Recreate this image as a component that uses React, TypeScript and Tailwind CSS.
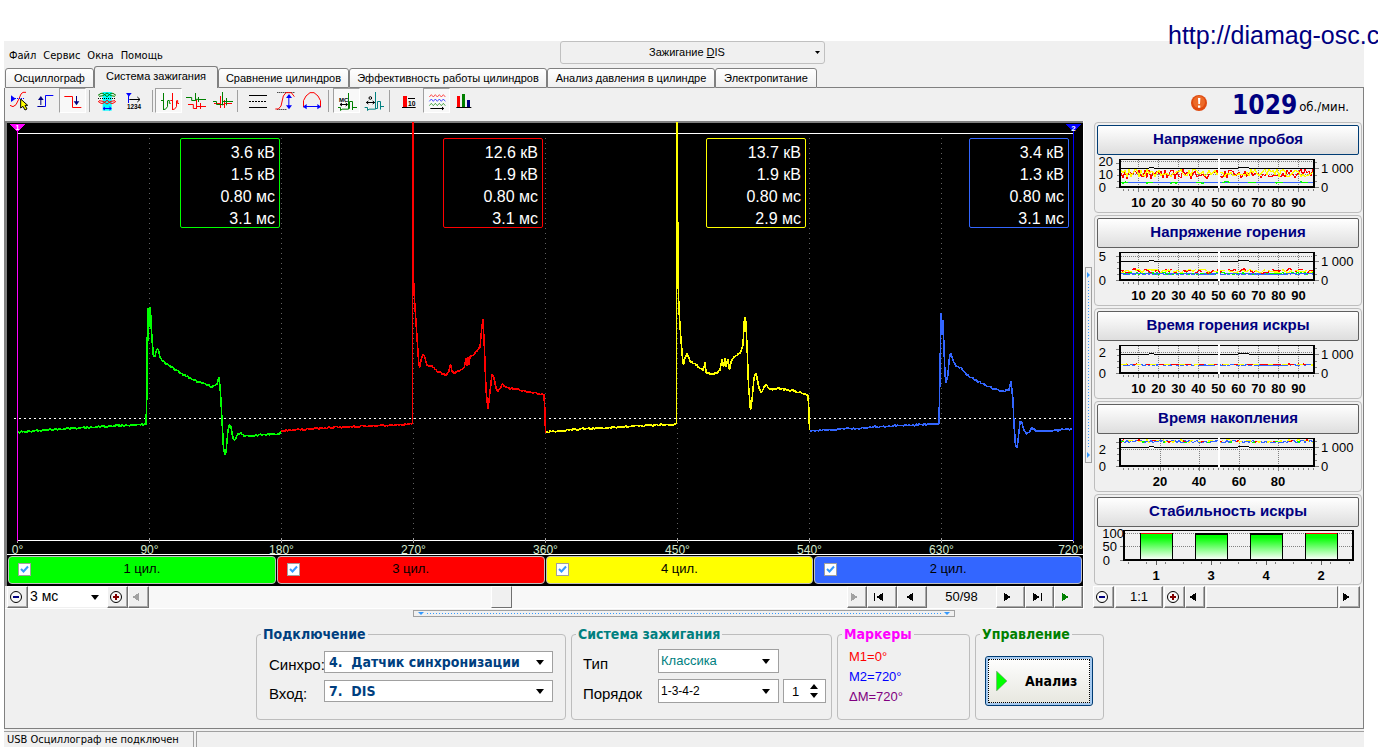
import React from "react";

type Pt = [number, number];

const sans = "font-['Liberation_Sans',Arial,sans-serif]";
const tahoma = "font-['DejaVu_Sans_Condensed','DejaVu_Sans',sans-serif]";

/* ---------- wave data ---------- */

const green: Pt[] = [[18, 432], [40, 430.5], [60, 429], [80, 428], [110, 426], [146, 424.5], [147, 390], [147.5, 308], [148.5, 341], [149, 308], [150.5, 308], [151, 325], [152.5, 345], [153.5, 357], [155, 356], [157, 349], [158.5, 350], [160, 357], [163, 361], [170, 366], [180, 373], [190, 378], [198, 382], [206, 384.5], [212, 387], [217, 384], [219, 377], [220, 387], [221, 401], [222, 420], [223.5, 448], [225, 455], [226, 452], [228, 430], [229.5, 424.5], [231, 427], [233, 438], [235, 440], [238, 434], [241, 432.5], [244, 436], [250, 436], [262, 435], [279, 434.5], [281, 431]];
const red: Pt[] = [[281, 431], [300, 429.5], [340, 427], [380, 425.5], [401, 424.5], [412.3, 423.5], [412.3, 123], [413.2, 123], [413.6, 280], [414.5, 300], [416, 322], [417.5, 345], [418.5, 360], [419.5, 368], [421, 360], [423, 354], [425, 358], [427, 365], [432, 366], [438, 372], [446, 375], [449, 371], [450.5, 364], [452, 372], [455, 373], [464, 368], [466, 358], [467, 366], [468, 357], [469, 365], [470, 357], [475, 353], [480, 347], [482, 326], [483, 319], [484.5, 350], [486, 390], [488, 409], [490, 392], [492, 374], [494, 378], [496, 388], [498, 392], [502, 384], [506, 387], [513, 389], [525, 391], [544, 395], [545, 412], [545.5, 433]];
const yellow: Pt[] = [[546, 432], [580, 429], [620, 427], [660, 425], [676.3, 424], [676.3, 123], [677.2, 123], [678, 280], [679, 310], [681, 340], [682.5, 358], [683.5, 365], [685, 358], [687, 353], [690, 361], [696, 365], [702, 369], [703, 371], [705, 362], [706, 372], [710, 374], [717, 373], [720, 370], [722, 359], [723.5, 367], [725, 358], [726, 367], [728, 359], [729.5, 370], [731, 362], [734, 357], [740, 353], [743, 345], [744.5, 318], [745.5, 317], [747, 345], [748.5, 385], [750.5, 410], [752, 400], [754, 378], [756, 373], [759, 388], [761, 393], [764, 387], [766, 384.5], [770, 389], [780, 389], [795, 391], [808, 395], [809, 412], [809.5, 430]];
const blue: Pt[] = [[810, 431], [850, 428.5], [900, 425.5], [939, 424], [940, 372], [941, 313], [942, 335], [943, 320], [944, 349], [945, 374], [946, 383], [948, 374], [949, 361], [950, 355], [951, 353], [953, 360], [956, 366], [962, 369], [966, 374], [975, 380], [985, 385], [995, 389], [1003, 391], [1009, 390], [1011, 381], [1013, 400], [1014, 425], [1015.5, 445], [1017, 448], [1018, 441], [1020, 422], [1021.5, 421], [1024, 430], [1027, 434], [1032, 428], [1036, 431], [1050, 431], [1072, 429]];

function noise(i: number) {
  const s = Math.sin(i * 127.1 + 3.7) * 43758.5453;
  return s - Math.floor(s) - 0.5;
}

function trace(points: Pt[], amount: number) {
  let d = `M${points[0][0]} ${points[0][1]}`;
  for (let i = 1; i < points.length; i++) {
    const [x0, y0] = points[i - 1];
    const [x1, y1] = points[i];
    const steps = Math.abs(y1 - y0) < 12 ? Math.floor(x1 - x0) : 0;
    for (let k = 1; k < steps; k++) {
      const t = k / steps;
      d += `L${(x0 + (x1 - x0) * t).toFixed(1)} ${(y0 + (y1 - y0) * t + noise(x0 + k) * amount).toFixed(1)}`;
    }
    d += `L${x1} ${y1}`;
  }
  return d;
}

const cylinders = [
  { name: "1 цил.", color: "#00ff00", bg: "bg-[#00ff00]", x: 180, wave: green, values: ["3.6 кВ", "1.5 кВ", "0.80 мс", "3.1 мс"] },
  { name: "3 цил.", color: "#ff0000", bg: "bg-[#ff0000]", x: 443, wave: red, values: ["12.6 кВ", "1.9 кВ", "0.80 мс", "3.1 мс"] },
  { name: "4 цил.", color: "#ffff00", bg: "bg-[#ffff00]", x: 706, wave: yellow, values: ["13.7 кВ", "1.9 кВ", "0.80 мс", "2.9 мс"] },
  { name: "2 цил.", color: "#3366ff", bg: "bg-[#3366ff]", x: 969, wave: blue, values: ["3.4 кВ", "1.3 кВ", "0.80 мс", "3.1 мс"] },
];

function Scope() {
  return (
    <svg viewBox="7 123 1076 432" className={`block w-full overflow-visible ${sans}`}>
      <rect x="7" y="123" width="1076" height="432" fill="#000" />
      <g shapeRendering="crispEdges">
        {[149, 281, 413, 545, 677, 809, 941].map((x) => (
          <path key={x} d={`M${x}.5 138V539`} stroke="#606060" strokeDasharray="1 4" />
        ))}
        <path d="M17 133.5H1073M17 540.5H1073M7 554.5H1083" stroke="#fff" />
        <path d="M14 418.5H1074" stroke="#fff" strokeDasharray="2 3" />
        {Array.from({ length: 9 }, (_, i) => (
          <path key={i} d={`M${17.5 + i * 132} 538V543`} stroke="#a0a0a0" />
        ))}
        <path d="M17.5 126V541" stroke="#ff00ff" />
        <path d="M1073.5 126V541" stroke="#0000ff" />
        <path d="M10 124H25L17.5 132Z" fill="#ff00ff" />
        <path d="M1066 124H1081L1073.5 132Z" fill="#0000ff" />
      </g>
      <text x="17.5" y="130" fontSize="7" fontWeight="700" fill="#fff" textAnchor="middle">1</text>
      <text x="1073.5" y="131" fontSize="8" fontWeight="700" fill="#fff" textAnchor="middle">2</text>
      {cylinders.map((c) => (
        <g key={c.name}>
          <path d={trace(c.wave, 1.8)} fill="none" stroke={c.color} strokeWidth="1.6" strokeLinejoin="bevel" shapeRendering="crispEdges" />
          <rect x={c.x + 0.5} y="138.5" width="99" height="89" rx="1.5" fill="none" stroke={c.color} />
          {c.values.map((v, i) => (
            <text key={i} x={c.x + 95} y={158 + i * 22} fontSize="16" fill="#fff" textAnchor="end">{v}</text>
          ))}
        </g>
      ))}
      {Array.from({ length: 9 }, (_, i) => (
        <text key={i} x={i === 8 ? 1083 : 17.5 + i * 132} y="554" fontSize="12" fill="#d4e8cc" textAnchor={i === 8 ? "end" : "middle"}>{i * 90}°</text>
      ))}
    </svg>
  );
}

/* ---------- side charts ---------- */

function series(base: number, amp: number, seed: number, step = 2) {
  let d = "";
  for (let x = 1121; x <= 1313; x += step) {
    d += `${d ? "L" : "M"}${x} ${(base + noise(x + seed) * amp).toFixed(1)}`;
  }
  return d;
}

type Trend = {
  title: string;
  focus?: boolean;
  left: [string, number][];
  ticks: [string, number][];
  lines: { d: string; color: string; dash?: string }[];
  rpmY: number;
  gridY: number[];
};

const tens: [string, number][] = [10, 20, 30, 40, 50, 60, 70, 80, 90].map((v, i) => [String(v), 1138.5 + i * 20]);

const trends: Trend[] = [
  {
    title: "Напряжение пробоя", focus: true, left: [["20", 161], ["10", 174], ["0", 187]], ticks: tens, rpmY: 168.5, gridY: [161.5, 174.5],
    lines: [
      { d: series(174, 9, 5), color: "#ff0000" },
      { d: series(173, 8, 41), color: "#ffff00" },
      { d: series(182.5, 0.5, 3), color: "#3366ff" },
      { d: series(182.5, 1.5, 9), color: "#00ff00", dash: "8 19" },
    ],
  },
  {
    title: "Напряжение горения", left: [["5", 163], ["0", 187]], ticks: tens, rpmY: 168.5, gridY: [163.5],
    lines: [
      { d: series(180.5, 2, 13), color: "#00ff00" },
      { d: series(178, 5, 21, 3), color: "#ff0000", dash: "9 4" },
      { d: series(178, 4, 31, 3), color: "#ffff00", dash: "12 3" },
      { d: series(181, 1, 3), color: "#3366ff" },
    ],
  },
  {
    title: "Время горения искры", left: [["2", 166], ["0", 187]], ticks: tens, rpmY: 168.5, gridY: [166.5],
    lines: [
      { d: series(179, 1, 3), color: "#3366ff" },
      { d: series(178.5, 1, 7), color: "#ff0000", dash: "8 5" },
      { d: series(178.5, 1, 17), color: "#ffff00", dash: "6 9" },
    ],
  },
  {
    title: "Время накопления", left: [["2", 170], ["0", 187]],
    ticks: [["20", 1160], ["40", 1199], ["60", 1239], ["80", 1278]], rpmY: 168.5, gridY: [170.5],
    lines: [
      { d: series(162.5, 3, 3), color: "#3366ff" },
      { d: series(162, 3, 7), color: "#ffff00", dash: "5 6" },
      { d: series(162, 3, 11), color: "#ff0000", dash: "4 16" },
      { d: series(163, 2, 17), color: "#00ff00", dash: "3 21" },
    ],
  },
];

function GroupTitle({ children, focus }: { children: React.ReactNode; focus?: boolean }) {
  return (
    <button
      className={`mx-[2px] mt-[2px] h-[30px] rounded-[2px] border bg-linear-to-b from-white to-[#dedede] pb-[2px] text-center text-[15px] font-bold text-[#000080] ${focus ? "border-[#003c74]" : "border-[#606060]"}`}
    >
      {children}
    </button>
  );
}

function TrendPanel({ t }: { t: Trend }) {
  return (
    <section className="flex h-[91px] flex-col rounded-[4px] border border-[#bdbdbd]">
      <GroupTitle focus={t.focus}>{t.title}</GroupTitle>
      <svg viewBox="1095 155 266 56" className="block w-full overflow-visible">
        <g shapeRendering="crispEdges" fill="none">
          {t.gridY.map((y) => <path key={y} d={`M1121 ${y}H1313`} stroke="#808080" strokeDasharray="1 1" />)}
          {t.ticks.map(([n, x]) => <path key={n} d={`M${x} 160V187`} stroke="#808080" strokeDasharray="1 1" />)}
          {t.ticks.map(([n, x]) => <path key={n} d={`M${x} 188V192`} stroke="#808080" />)}
          <path d="M1123 189.5H1314" stroke="#808080" strokeWidth="2" strokeDasharray="1 4" />
          <path d="M1116 187.5H1119M1117 181.5H1119M1117 175.5H1119M1117 169.5H1119M1116 163.5H1119M1315 187.5H1319M1315 181.5H1317M1315 175.5H1317M1315 168.5H1319M1315 162.5H1317" stroke="#808080" />
          <path d={`M1121 ${t.rpmY}H1148L1150 ${t.rpmY - 1}H1153L1155 ${t.rpmY}H1237L1239 ${t.rpmY - 1}H1248L1250 ${t.rpmY}H1313`} stroke="#000" />
          {t.lines.map((l, i) => <path key={i} d={l.d} stroke={l.color} strokeDasharray={l.dash} strokeWidth="1.2" />)}
          <path d="M1119 159.5H1315" stroke="#000" />
          <path d="M1120 159V188M1314 159V188M1119 187H1315" stroke="#000" strokeWidth="2" />
          <path d="M1218.5 158V188" stroke="#fff" strokeWidth="2" />
        </g>
        <g fontSize="13" fill="#000">
          {t.left.map(([n, y]) => <text key={n} x={n.length > 1 ? 1113 : 1106} y={y + 5} textAnchor="end">{n}</text>)}
          <text x="1321" y="173">1 000</text>
          <text x="1321" y="192">0</text>
          {t.ticks.map(([n, x]) => <text key={n} x={x} y="207" textAnchor="middle" fontWeight="700">{n}</text>)}
        </g>
      </svg>
    </section>
  );
}

function StabilityPanel() {
  const bars: [string, number, boolean][] = [["1", 1140, true], ["3", 1195, false], ["4", 1250, false], ["2", 1305, true]];
  return (
    <section className="flex h-[91px] flex-col rounded-[4px] border border-[#bdbdbd]">
      <GroupTitle>Стабильность искры</GroupTitle>
      <svg viewBox="1095 527 266 56" className="block w-full overflow-visible">
        <defs>
          <linearGradient id="bar" x1="0" y1="0" x2="0" y2="1">
            <stop offset="0" stopColor="#00ff00" />
            <stop offset="0.15" stopColor="#00ff00" />
            <stop offset="1" stopColor="#ffffff" />
          </linearGradient>
        </defs>
        <g shapeRendering="crispEdges" fill="none">
          <path d="M1125 533.5H1352M1125 546.5H1352" stroke="#808080" strokeDasharray="1 1" />
          <path d="M1120 546.5H1124M1120 560.5H1124M1128 562V564M1146 562V564M1165 562V564M1183 562V564M1201 562V564M1220 562V564M1238 562V564M1256 562V564M1275 562V564M1293 562V564M1311 562V564M1330 562V564M1349 562V564" stroke="#808080" />
          {bars.map(([n, x, hot]) => (
            <g key={n}>
              <rect x={x + 0.5} y="533.5" width="32" height="26" fill="url(#bar)" stroke="#000" />
              <path d={`M${x + 1} ${hot ? 533.5 : 534}H${x + 32}`} stroke={hot ? "#ff0000" : "#000"} strokeWidth={hot ? 1 : 2} />
              <path d={`M${x + 16.5} 561V565`} stroke="#606060" />
            </g>
          ))}
          <path d="M1123 530.5H1354" stroke="#000" />
          <path d="M1124 530V561M1353 530V561M1123 560H1354" stroke="#000" strokeWidth="2" />
        </g>
        <g fontSize="13" fill="#000">
          <text x="1124" y="538" textAnchor="end">100</text>
          <text x="1117" y="551" textAnchor="end">50</text>
          <text x="1110" y="565" textAnchor="end">0</text>
          {bars.map(([n, x]) => <text key={n} x={x + 16} y="580" textAnchor="middle" fontWeight="700">{n}</text>)}
        </g>
      </svg>
    </section>
  );
}

/* ---------- toolbar ---------- */

function Tool({ label, pressed, ml, box, children }: { label: string; pressed?: boolean; ml?: string; box: string; children: React.ReactNode }) {
  return (
    <button
      aria-label={label}
      aria-pressed={pressed}
      className={`flex h-[25px] w-[27px] shrink-0 items-center justify-center border ${ml ?? ""} ${pressed ? "border-t-[#a0a0a0] border-r-white border-b-white border-l-[#a0a0a0] bg-[#f8f8f8]" : "border-transparent"}`}
    >
      <svg viewBox={box} width="20" height="22" fill="none" strokeWidth="3" className="shrink-0">{children}</svg>
    </button>
  );
}

const Sep = ({ ml }: { ml: string }) => <span className={`h-[22px] w-px shrink-0 bg-[#a0a0a0] ${ml}`} />;

function Toolbar() {
  return (
    <div className="flex h-[33px] items-start">
      <div className="flex items-center">
        <Tool label="Синхронизация" box="24 150 60 66">
          <path d="M27 196L36 200L45 194L54 176L60 162L66 157H75" stroke="#ff0000" />
          <path d="M42 175.5H72" stroke="#0000ff" strokeDasharray="3 3" />
          <path d="M30 166V186L44 176Z" fill="#0000ff" />
          <path d="M59 177V204L66 199L72 210L78 207L72 196H80Z" fill="#ffff00" stroke="#000" />
        </Tool>
        <Tool label="Фронт" box="106 150 60 66">
          <path d="M110 199.5H134.5V166.5H158" stroke="#0000ff" />
          <path d="M120.5 195V176M112 199.5H128" stroke="#000080" />
          <path d="M112 180H129L120.5 168Z" fill="#000080" />
        </Tool>
        <Tool label="Спад" pressed box="188 150 60 66">
          <path d="M192 169.5H216.5V202.5H243" stroke="#ff0000" />
          <path d="M228.5 168V188" stroke="#000080" />
          <path d="M220 184H237L228.5 196Z" fill="#000080" />
        </Tool>
        <Sep ml="ml-[3px]" />
        <Tool label="Диапазон" ml="ml-[3px]" box="291 150 60 66">
          <path d="M308 156H335V212H308Z" fill="#00ffff" />
          <path d="M294 166L303 160H309L321 170L333 160H339L348 166" stroke="#008000" />
          <path d="M297 169L309 167L321 159L333 167L345 169" stroke="#008000" />
          <path d="M294 175.5H348" stroke="#000" strokeDasharray="3 3" />
          <path d="M294 184L303 190H309L321 181L333 190H339L348 184" stroke="#ff0000" />
          <path d="M297 182L309 184L321 192L333 184L345 182" stroke="#ff0000" />
          <path d="M310 205.5H333M315 201L309 205.5L315 210M328 201L334 205.5L328 210" stroke="#0000ff" />
        </Tool>
        <Tool label="Отсчёт" box="373 150 60 66">
          <path d="M379 159H396L387.5 170Z" fill="#0000ff" />
          <path d="M386.5 168V189" stroke="#0000ff" />
          <path d="M389 178.5H420M413 171L421 178.5L413 186" stroke="#000" />
          <text x="382" y="208" fontSize="19" fontWeight="700" fill="#000" className={sans}>1234</text>
        </Tool>
        <Sep ml="ml-[5px]" />
        <Tool label="Наложение" pressed ml="ml-[2px]" box="477 150 60 66">
          <path d="M483 181.5H490.5V159V210M490.5 208H496L502.5 200V183M502.5 181.5H508V190H512" stroke="#008000" />
          <path d="M511 181.5H517.5V159V210M517.5 208H523L529.5 200V183M529.5 181.5H533V190.5H538" stroke="#ff0000" />
        </Tool>
        <Tool label="Каскад" box="558 150 60 66">
          <path d="M558 172.5H575V181.5H586.5V159V181.5M586.5 178H595.5V171V186M595.5 178.5H618" stroke="#008000" />
          <path d="M564 193.5H580V205.5H589.5V180V207M589.5 199.5H601.5V189V207M601.5 199.5H618" stroke="#ff0000" />
        </Tool>
        <Tool label="Совмещение" box="639 150 60 66">
          <path d="M642 190.5H661.5V168V204M661.5 193.5H673.5V180V204M673.5 190.5H696" stroke="#ff0000" />
          <path d="M639 184.5H649.5V193.5H667.5V156V196M667.5 184.5H679.5V174V196M679.5 184.5H699" stroke="#008000" />
        </Tool>
        <Sep ml="ml-[1px]" />
        <Tool label="Линии" ml="ml-[6px]" box="744 150 60 66">
          <path d="M747 166.5H801M747 202.5H801" stroke="#000" />
          <path d="M747 184.5H801" stroke="#000" strokeDasharray="6 3" />
        </Tool>
        <Tool label="Амплитуда" box="827 150 60 66">
          <path d="M834 157.5H885M834 208.5H864" stroke="#000" strokeDasharray="3 3" />
          <path d="M828 207H837L845 198L852 168L860 158H876L885 170" stroke="#ff0000" />
          <path d="M868.5 166V202" stroke="#0000ff" />
          <path d="M860 174H878L869 162ZM860 196H878L869 208Z" fill="#0000ff" />
        </Tool>
        <Tool label="Длительность" box="906 150 60 66">
          <path d="M910.5 202V182L918 168L930 158H942L954 168L961.5 182V202" stroke="#ff0000" />
          <path d="M918 199.5H954" stroke="#0000ff" />
          <path d="M920 192V208L909 200ZM952 192V208L963 200Z" fill="#0000ff" />
        </Tool>
        <Sep ml="ml-[3px]" />
        <Tool label="Миллисекунды" pressed ml="ml-[4px]" box="24 150 60 66">
          <text x="30" y="186" fontSize="18" fontWeight="700" fill="#000" className={sans}>МС</text>
          <path d="M33 193.5H54M39 189L33 193.5L39 198M50 189L56 193.5L50 198" stroke="#000" />
          <path d="M27 202.5H34.5V211.5L39 207.5H58.5V159V205.5H61.5V184.5H70.5V210V202.5H84" stroke="#008000" />
        </Tool>
        <Tool label="Градусы" box="102 150 60 66">
          <circle cx="121" cy="174" r="4" stroke="#000" />
          <path d="M109 187.5H134M115 183L109 187.5L115 192M128 183L134 187.5L128 192" stroke="#000" />
          <path d="M104 202.5H112.5V211.5L117 207.5H136.5V156V205.5H142.5V184.5H151.5V208V199.5H162" stroke="#008080" />
        </Tool>
        <Sep ml="ml-[2px]" />
        <Tool label="Значения" ml="ml-[5px]" box="204 150 60 66">
          <path d="M216 168H228V204H216Z" fill="#ff0000" />
          <path d="M231 175.5H252M213 202.5H254" stroke="#000" />
          <text x="231" y="198" fontSize="20" fontWeight="700" fill="#000" className={sans}>10</text>
        </Tool>
        <Tool label="Тренды" pressed ml="ml-px" box="290 150 60 66">
          <path d="M297 171L303 164L309 171L315 164L321 171L327 164L333 171L339 164L345 171" stroke="#ff0000" strokeWidth="2" />
          <path d="M297 184L303 177L309 184L315 177L321 184L327 177L333 184L339 177L345 184" stroke="#0000ff" strokeWidth="2" />
          <path d="M297 197L303 190L309 197L315 190L321 197L327 190L333 197L339 190L345 197" stroke="#008000" strokeWidth="2" />
          <path d="M300 205.5H340M335 201L340 205.5L335 210" stroke="#000" />
        </Tool>
        <Tool label="Диаграмма" box="371 150 60 66">
          <path d="M380 168H389V201H380Z" fill="#ff0000" />
          <path d="M395 162H404V201H395Z" fill="#008000" />
          <path d="M410 180H419V201H410Z" fill="#000080" />
          <path d="M378 202.5H423" stroke="#000" />
        </Tool>
      </div>
      <div className={`ml-auto flex items-center pr-[14px] ${tahoma}`}>
        <svg viewBox="0 0 16 16" width="16" height="16" className="-mt-[4px] mr-[25px]">
          <circle cx="8" cy="8" r="8" fill="#df4a10" />
          <circle cx="8" cy="7" r="6" fill="#ec6a28" />
          <path d="M7 3H9.4L9 9H7.3ZM7 10.5H9.3V12.8H7Z" fill="#fff" />
        </svg>
        <output className="text-[26px] leading-[34px] font-bold text-[#000080]">1029</output>
        <span className="ml-[2px] pt-[4px] text-[13px] leading-[20px]">об./мин.</span>
      </div>
    </div>
  );
}

/* ---------- small controls ---------- */

const raised = "flex shrink-0 items-center justify-center border border-t-white border-r-[#707070] border-b-[#707070] border-l-white bg-[#f0f0f0] shadow-[inset_-1px_-1px_0_#a8a8a8]";

function Zoom({ sign }: { sign: "+" | "-" }) {
  return (
    <button aria-label={sign === "+" ? "Увеличить" : "Уменьшить"} className={`h-[22px] w-[21px] pr-[4px] ${raised}`}>
      <svg viewBox="0 0 14 14" width="14" height="14" fill="none">
        <circle cx="7" cy="7" r="5.5" stroke="#000" fill="#f8f8f8" />
        <path d="M4 7H10" stroke={sign === "+" ? "#800000" : "#000080"} strokeWidth="2" />
        {sign === "+" && <path d="M7 4V10" stroke="#800000" strokeWidth="2" />}
      </svg>
    </button>
  );
}

function Arrow({ dir, bar, color = "#000", label, w }: { dir: "l" | "r"; bar?: boolean; color?: string; label: string; w: string }) {
  return (
    <button aria-label={label} className={`h-[22px] pr-[5px] pb-[1px] ${w} ${raised}`}>
      <svg viewBox="0 0 12 10" width="12" height="10" fill={color} shapeRendering="crispEdges">
        {dir === "l" ? <path d="M9 1V9L2 5Z" /> : <path d="M2 1V9L9 5Z" />}
        {bar && <path d={dir === "l" ? "M0 1H1V9H0Z" : "M10 1H11V9H10Z"} />}
      </svg>
    </button>
  );
}

function Drop({ label, value, box, text }: { label: string; value: string; box: string; text: string }) {
  return (
    <span className={`relative block bg-white ${box}`}>
      <select aria-label={label} className={`block h-full w-full appearance-none bg-transparent pr-5 outline-none ${text}`}>
        <option>{value}</option>
      </select>
      <svg viewBox="0 0 8 5" width="8" height="5" className="pointer-events-none absolute top-1/2 right-[8px] -mt-[2px]">
        <path d="M0 0H8L4 5Z" fill="#000" />
      </svg>
    </span>
  );
}

const tabs = [
  { name: "Осциллограф", w: "w-[89px]" },
  { name: "Система зажигания", w: "w-[124px]", active: true },
  { name: "Сравнение цилиндров", w: "w-[131px]" },
  { name: "Эффективность работы цилиндров", w: "w-[198px]" },
  { name: "Анализ давления в цилиндре", w: "w-[168px]" },
  { name: "Электропитание", w: "w-[102px]" },
];

const fieldset = "rounded-[4px] border border-[#bdbdbd]";
const legend = `ml-[4px] px-[2px] text-[14px] leading-[14px] font-bold ${tahoma}`;
const boldSelect = `pl-[4px] text-[14px] font-bold text-[#003f7f] ${tahoma}`;

export default function App() {
  return (
    <div className={`min-h-screen overflow-hidden bg-white text-[12px] text-black ${sans}`}>
      <header className="flex h-[41px] justify-end">
        <a href="http://diamag-osc.com" className="relative w-[210px] overflow-visible pt-[21px] text-[25px] leading-[29px] whitespace-nowrap text-[#000080]">http://diamag-osc.c</a>
      </header>

      <main className="mr-[14px] ml-[4px] bg-[#f0f0f0]">
        <div className="grid h-[25px] grid-cols-[556fr_265px_539fr] items-start text-[11px]">
          <nav className={`flex gap-[7px] pt-[7px] pl-[5px] leading-[16px] ${tahoma}`}>
            <a href="#file">Файл</a>
            <a href="#service">Сервис</a>
            <a href="#windows">Окна</a>
            <a href="#help">Помощь</a>
          </nav>
          <button className="flex h-[23px] items-center rounded-[3px] border border-[#c0c0c0] pr-[4px]">
            <span className="flex-1 pr-[2px]">Зажигание <u>D</u>IS</span>
            <svg viewBox="0 0 5 3" width="5" height="3"><path d="M0 0H5L2.5 3Z" fill="#000" /></svg>
          </button>
        </div>

        <div role="tablist" className="flex h-[22px] items-end pl-[1px] text-[11px]">
          {tabs.map((t) => (
            <button
              key={t.name}
              role="tab"
              aria-selected={!!t.active}
              className={`shrink-0 rounded-t-[3px] border-t border-r border-l border-[#808080] whitespace-nowrap ${t.w} ${t.active ? "h-[22px] bg-[#f0f0f0] pb-[2px]" : "h-[20px] border-b bg-linear-to-b from-white to-[#f0f0f0]"}`}
            >
              {t.name}
            </button>
          ))}
          <span className="h-px flex-1 bg-[#808080]" />
        </div>

        <div className="border-r border-b border-l border-[#808080]">
          <Toolbar />

          <div className="flex">
            <div className="min-w-0 flex-1 border-r border-white">
              <div className="border-t-2 border-l-2 border-[#808080] bg-black">
                <Scope />
                <div className="flex gap-px px-px pt-px pb-[2px]">
                  {cylinders.map((c) => (
                    <label key={c.name} className={`relative flex h-[28px] flex-1 items-center justify-center rounded-[4px] border border-[#c0c0c0] pb-[2px] ${c.bg} text-[13px]`}>
                      <input type="checkbox" defaultChecked className="peer absolute left-[9px] size-[13px] appearance-none border border-[#a0a0a0] bg-white" />
                      <svg viewBox="0 0 9 9" width="9" height="9" fill="none" className="pointer-events-none absolute left-[11px] hidden peer-checked:block">
                        <path d="M1 4L3.5 6.5L8 1.5" stroke="#3399ff" strokeWidth="2" />
                      </svg>
                      {c.name}
                    </label>
                  ))}
                </div>
              </div>
              <div className="flex h-[23px] border-b border-white pl-[2px]">
                <Zoom sign="-" />
                <Drop label="Развёртка" value="3 мс" box="w-[79px] h-[21px]" text="pl-[2px] text-[14px]" />
                <Zoom sign="+" />
                <Arrow dir="l" color="#a0a0a0" label="Прокрутка влево" w="w-[21px]" />
                <input
                  type="range"
                  aria-label="Позиция"
                  min="1"
                  max="98"
                  defaultValue="50"
                  className="m-0 h-[22px] min-w-0 flex-1 appearance-none bg-[#f8f8f8] [&::-webkit-slider-thumb]:h-[22px] [&::-webkit-slider-thumb]:w-[21px] [&::-webkit-slider-thumb]:appearance-none [&::-webkit-slider-thumb]:border [&::-webkit-slider-thumb]:border-white [&::-webkit-slider-thumb]:border-r-[#707070] [&::-webkit-slider-thumb]:border-b-[#707070] [&::-webkit-slider-thumb]:bg-[#f0f0f0]"
                />
                <Arrow dir="r" color="#a0a0a0" label="Прокрутка вправо" w="w-[20px]" />
                <Arrow dir="l" bar label="Первый" w="w-[30px]" />
                <Arrow dir="l" label="Предыдущий" w="w-[30px]" />
                <output className="w-[69px] text-center text-[13px] leading-[21px]">50/98</output>
                <Arrow dir="r" label="Следующий" w="w-[29px]" />
                <Arrow dir="r" bar label="Последний" w="w-[29px]" />
                <Arrow dir="r" color="#008000" label="Пуск" w="w-[29px]" />
              </div>
            </div>

            <div className="flex w-[9px] shrink-0 items-center justify-center">
              <button aria-label="Свернуть графики" className="flex h-[196px] w-[7px] flex-col items-center justify-between border border-[#a0a0a0] py-[4px]">
                <svg viewBox="0 0 3 6" width="3" height="6" fill="#3399ff"><path d="M0 0V6L3 3Z" /></svg>
                <span className="my-[3px] w-px flex-1 bg-[repeating-linear-gradient(to_bottom,#3399ff_0_1px,transparent_1px_3px)]" />
                <svg viewBox="0 0 3 6" width="3" height="6" fill="#3399ff"><path d="M0 0V6L3 3Z" /></svg>
              </button>
            </div>

            <aside className="w-[270px] shrink-0">
              <div className="flex flex-col gap-[2px] pt-[1px] pr-px pb-px pl-px">
                {trends.map((t) => <TrendPanel key={t.title} t={t} />)}
                <StabilityPanel />
              </div>
              <div className="flex pr-[3px]">
                <Zoom sign="-" />
                <button className={`mx-px h-[22px] w-[48px] text-[13px] ${raised}`}>1:1</button>
                <Zoom sign="+" />
                <Arrow dir="l" label="Сдвиг влево" w="w-[20px]" />
                <input
                  type="range"
                  aria-label="Окно графиков"
                  className="m-0 mx-px h-[22px] min-w-0 flex-1 appearance-none border border-t-white border-r-[#707070] border-b-[#707070] border-l-white bg-[#f0f0f0] [&::-webkit-slider-thumb]:w-0 [&::-webkit-slider-thumb]:appearance-none"
                />
                <Arrow dir="r" label="Сдвиг вправо" w="w-[21px]" />
              </div>
            </aside>
          </div>

          <button aria-label="Свернуть панель" className="mx-auto mt-[1px] flex h-[7px] w-[542px] items-center justify-between border border-[#a0a0a0] px-[4px]">
            <svg viewBox="0 0 6 3" width="6" height="3" fill="#3399ff"><path d="M0 0H6L3 3Z" /></svg>
            <span className="mx-[3px] h-px flex-1 bg-[repeating-linear-gradient(to_right,#3399ff_0_1px,transparent_1px_3px)]" />
            <svg viewBox="0 0 6 3" width="6" height="3" fill="#3399ff"><path d="M0 0H6L3 3Z" /></svg>
          </button>

          <div className="flex h-[111px] items-start justify-center gap-[5px] pt-[10px] pr-[8px]">
            <fieldset className={`h-[93px] w-[310px] ${fieldset}`}>
              <legend className={`text-[#003f7f] ${legend}`}>Подключение</legend>
              <div className="grid grid-cols-[55px_229px] gap-y-[6px] pt-[10px] pl-[12px]">
                <span className="pt-[5px] text-[15px] leading-[18px] whitespace-nowrap">Синхро:</span>
                <Drop label="Синхро" value={"4.\u00a0 Датчик синхронизации"} box="h-[22px] border border-[#a0a0a0]" text={boldSelect} />
                <span className="pt-[5px] text-[15px] leading-[18px]">Вход:</span>
                <Drop label="Вход" value={"7.\u00a0 DIS"} box="h-[22px] border border-[#a0a0a0]" text={boldSelect} />
              </div>
            </fieldset>

            <fieldset className={`h-[93px] w-[261px] ${fieldset}`}>
              <legend className={`text-[#008080] ${legend}`}>Система зажигания</legend>
              <div className="grid grid-cols-[75px_121px_43px] gap-y-[6px] pt-[8px] pl-[11px]">
                <span className="pt-[6px] text-[15px] leading-[18px]">Тип</span>
                <Drop label="Тип" value="Классика" box="h-[24px] border border-[#a0a0a0]" text="pl-[2px] text-[13px] text-[#008080]" />
                <span />
                <span className="pt-[6px] text-[15px] leading-[18px]">Порядок</span>
                <Drop label="Порядок" value="1-3-4-2" box="h-[24px] border border-[#a0a0a0]" text="pl-[2px] text-[12px]" />
                <span className="relative ml-[4px] block h-[24px] w-[43px] border border-[#a0a0a0] bg-white">
                  <input aria-label="Цилиндр" defaultValue="1" className="h-full w-full bg-transparent pl-[8px] text-[13px] outline-none" />
                  <svg viewBox="0 0 8 14" width="8" height="14" className="absolute top-[4px] right-[7px]"><path d="M0 5H8L4 0ZM0 9H8L4 14Z" fill="#000" /></svg>
                </span>
              </div>
            </fieldset>

            <fieldset className={`h-[93px] w-[133px] ${fieldset}`}>
              <legend className={`text-[#ff00ff] ${legend}`}>Маркеры</legend>
              <div className="pt-[6px] pl-[11px] text-[13px] leading-[20px]">
                <p className="text-[#ff0000]">M1=0°</p>
                <p className="text-[#0000ff]">M2=720°</p>
                <p className="text-[#800080]">ΔM=720°</p>
              </div>
            </fieldset>

            <fieldset className={`h-[93px] w-[129px] ${fieldset}`}>
              <legend className={`text-[#008000] ${legend}`}>Управление</legend>
              <button className={`mt-[15px] ml-[9px] flex h-[50px] w-[108px] items-center rounded-[3px] border border-[#003c74] bg-linear-to-b from-white to-[#e6e6de] p-[2px] shadow-[inset_0_0_0_2px_#a6caf0] ${tahoma}`}>
                <span className="flex h-full w-full items-center border border-dotted border-black pl-[7px] text-[14px] font-bold">
                  <svg viewBox="0 0 11 20" width="11" height="20"><path d="M0.5 0V20L11 10Z" fill="#00ff00" stroke="#808080" strokeWidth="0.5" /></svg>
                  <span className="pl-[18px]">Анализ</span>
                </span>
              </button>
            </fieldset>
          </div>
        </div>

        <footer className="mt-[2px] flex h-[16px] gap-[2px] text-[11px] leading-[16px]">
          <span className={`w-[190px] border-t border-r border-[#a0a0a0] pl-[3px] whitespace-nowrap ${tahoma}`}>USB Осциллограф не подключен</span>
          <span className="flex-1 border-t border-l border-[#a0a0a0]" />
        </footer>
      </main>
    </div>
  );
}
